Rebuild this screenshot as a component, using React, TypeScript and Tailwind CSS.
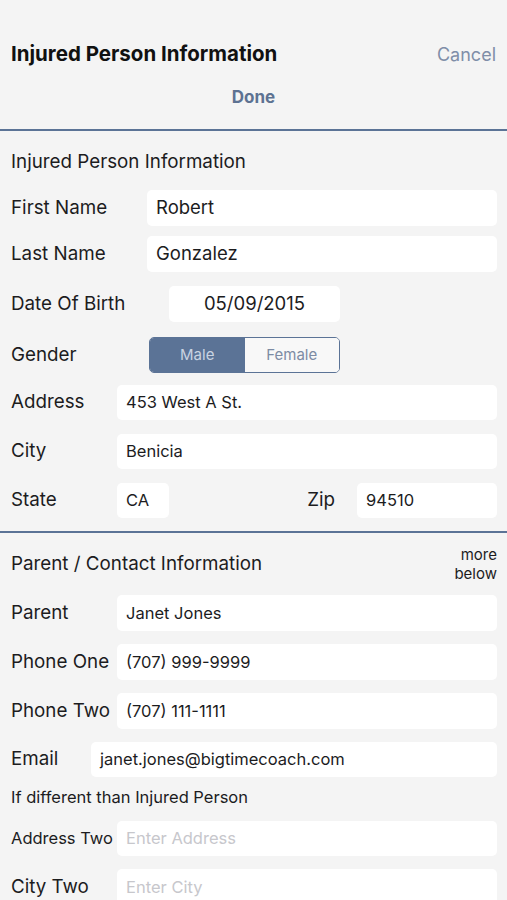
import React from "react";

const font = { fontFamily: "Inter, 'Noto Sans', sans-serif" };

function Box({
  value,
  placeholder,
  className = "",
  text = "text-[16.5px]",
}: {
  value?: string;
  placeholder?: string;
  className?: string;
  text?: string;
}) {
  return (
    <div className={`bg-white rounded-[5px] flex items-center px-[9px] ${text} ${className}`}>
      {value ? (
        <span className="text-[#1c1c1e]">{value}</span>
      ) : (
        <span className="text-[#c7c7cc]">{placeholder}</span>
      )}
    </div>
  );
}

function Row({
  label,
  labelW,
  mt,
  h = "h-[36px]",
  labelSize = "text-[18.8px]",
  children,
}: {
  label: string;
  labelW: string;
  mt: string;
  h?: string;
  labelSize?: string;
  children: React.ReactNode;
}) {
  return (
    <div className={`flex items-center ${mt} ${h}`}>
      <div className={`${labelW} shrink-0 ${labelSize} text-[#1c1c1e]`}>{label}</div>
      {children}
    </div>
  );
}

export default function App() {
  return (
    <div className="w-[507px] h-[900px] overflow-hidden bg-[#f4f4f4]" style={font}>
      {/* header */}
      <div className="pt-[40px] px-[11px]">
        <div className="flex items-center justify-between h-[28px]">
          <h1 className="text-[20.5px] font-bold text-[#111]">Injured Person Information</h1>
          <button className="text-[18px] text-[#7f8ea8]">Cancel</button>
        </div>
        <div className="mt-[16px] h-[28px] flex items-center justify-center">
          <button className="text-[17px] font-bold text-[#5d7292]">Done</button>
        </div>
      </div>
      <div className="mt-[17px] h-[2px] bg-[#5b7396]" />

      {/* injured person */}
      <div className="pl-[11px] pr-[10px]">
        <div className="mt-[19px] h-[24px] flex items-center text-[18.8px] text-[#1c1c1e]">
          Injured Person Information
        </div>
        <Row label="First Name" labelW="w-[136px]" mt="mt-[16px]">
          <Box value="Robert" text="text-[18.5px]" className="flex-1 h-full" />
        </Row>
        <Row label="Last Name" labelW="w-[136px]" mt="mt-[10px]">
          <Box value="Gonzalez" text="text-[18.5px]" className="flex-1 h-full" />
        </Row>
        <Row label="Date Of Birth" labelW="w-[158px]" mt="mt-[14px]">
          <div className="w-[171px] h-full bg-white rounded-[5px] flex items-center justify-center text-[18.5px] text-[#1c1c1e]">
            05/09/2015
          </div>
        </Row>
        <Row label="Gender" labelW="w-[138px]" mt="mt-[15px]">
          <div className="w-[191px] h-full flex rounded-[5px] border border-[#5b7396] overflow-hidden text-[15px]">
            <div className="w-1/2 bg-[#5b7396] text-[#c9d3e2] flex items-center justify-center">Male</div>
            <div className="w-1/2 bg-[#f8f8f8] text-[#7d8ba3] flex items-center justify-center">Female</div>
          </div>
        </Row>
        <Row label="Address" labelW="w-[106px]" mt="mt-[12px]" h="h-[35px]">
          <Box value="453 West A St." className="flex-1 h-full" />
        </Row>
        <Row label="City" labelW="w-[106px]" mt="mt-[14px]" h="h-[35px]">
          <Box value="Benicia" className="flex-1 h-full" />
        </Row>
        <Row label="State" labelW="w-[106px]" mt="mt-[14px]" h="h-[35px]">
          <Box value="CA" className="w-[52px] h-full" />
          <div className="flex-1 flex justify-end pr-[22px] text-[18.8px] text-[#1c1c1e]">Zip</div>
          <Box value="94510" className="w-[140px] h-full" />
        </Row>
      </div>
      <div className="mt-[13px] h-[2px] bg-[#5b7396]" />

      {/* parent / contact */}
      <div className="pl-[11px] pr-[10px]">
        <div className="mt-[17px] h-[28px] flex items-center justify-between">
          <span className="text-[18.8px] text-[#1c1c1e]">Parent / Contact Information</span>
          <span className="text-[15px] leading-[19px] text-[#1c1c1e] text-right">
            more
            <br />
            below
          </span>
        </div>
        <Row label="Parent" labelW="w-[106px]" mt="mt-[17px]">
          <Box value="Janet Jones" className="flex-1 h-full" />
        </Row>
        <Row label="Phone One" labelW="w-[106px]" mt="mt-[13px]">
          <Box value="(707) 999-9999" className="flex-1 h-full" />
        </Row>
        <Row label="Phone Two" labelW="w-[106px]" mt="mt-[13px]">
          <Box value="(707) 111-1111" className="flex-1 h-full" />
        </Row>
        <Row label="Email" labelW="w-[80px]" mt="mt-[13px]" h="h-[35px]">
          <Box value="janet.jones@bigtimecoach.com" className="flex-1 h-full" />
        </Row>
        <div className="mt-[8px] h-[24px] flex items-center text-[16.5px] text-[#1c1c1e]">
          If different than Injured Person
        </div>
        <Row label="Address Two" labelW="w-[106px]" mt="mt-[12px]" h="h-[35px]" labelSize="text-[16.5px]">
          <Box placeholder="Enter Address" className="flex-1 h-full" />
        </Row>
        <Row label="City Two" labelW="w-[106px]" mt="mt-[13px]">
          <Box placeholder="Enter City" className="flex-1 h-full" />
        </Row>
      </div>
    </div>
  );
}
